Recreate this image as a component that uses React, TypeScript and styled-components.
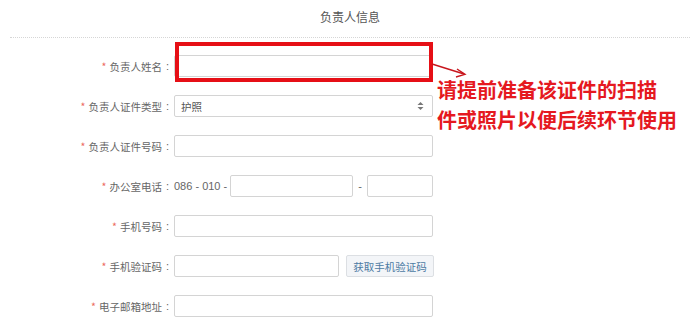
import styled, { createGlobalStyle } from 'styled-components';

const GlobalStyle = createGlobalStyle`
  html, body {
    margin: 0;
    padding: 0;
    background: #fff;
  }
  body {
    font-family: "Noto Sans CJK SC", "Noto Sans", sans-serif;
    color: #666;
  }
`;

const Page = styled.div`
  position: relative;
  width: 700px;
  height: 336px;
  overflow: hidden;
`;

const Title = styled.div`
  height: 37px;
  line-height: 34px;
  text-align: center;
  font-size: 12px;
  color: #555;
`;

const Divider = styled.div`
  margin: 0 10px;
  border-top: 1px dotted #d6d6d6;
`;

const Form = styled.div`
  display: flex;
  flex-direction: column;
  gap: 18px;
  padding-top: 17px;
`;

const Row = styled.div`
  display: grid;
  grid-template-columns: 172px auto;
  column-gap: 2px;
  align-items: center;
  height: 22px;
`;

const Label = styled.label`
  display: flex;
  justify-content: flex-end;
  align-items: center;
  font-size: 10.5px;
  color: #666;
  white-space: nowrap;
`;

const Star = styled.span`
  color: #ec6a5e;
  margin-right: 3px;
`;

const Colon = styled.span`
  margin: 0 3px 0 4px;
  font-family: "Liberation Sans", sans-serif;
  font-size: 11px;
`;

const Field = styled.div<{ $gap?: number }>`
  display: flex;
  align-items: center;
  gap: ${p => p.$gap ?? 4}px;
  font-size: 11px;
  color: #666;
`;

const Input = styled.input<{ $w: number }>`
  box-sizing: border-box;
  width: ${p => p.$w}px;
  height: 22px;
  border: 1px solid #d4d4d4;
  border-radius: 2px;
  background: #fff;
  padding: 0 6px;
  outline: none;
`;

const SelectBox = styled.div`
  box-sizing: border-box;
  width: 259px;
  height: 22px;
  border: 1px solid #d4d4d4;
  border-radius: 2px;
  display: flex;
  align-items: center;
  justify-content: space-between;
  padding: 0 8px 0 6px;
  font-size: 10.5px;
  color: #555;
`;

const Fixed = styled.span`
  font-family: "Liberation Sans", sans-serif;
  font-size: 11px;
  white-space: pre;
`;

const Dash = styled.span`
  width: 8px;
  text-align: center;
  font-family: "Liberation Sans", sans-serif;
`;

const CodeButton = styled.button`
  box-sizing: border-box;
  width: 88px;
  height: 22px;
  margin-left: 3px;
  border: 1px solid #dcdfe3;
  border-radius: 2px;
  background: #f3f5f8;
  color: #4c7aa3;
  font-family: inherit;
  font-size: 10.5px;
  padding: 0;
`;

const RedBox = styled.div`
  position: absolute;
  left: 175px;
  top: 42px;
  width: 258px;
  height: 40px;
  box-sizing: border-box;
  border: 4px solid #e60f16;
`;

const Arrow = styled.svg`
  position: absolute;
  left: 430px;
  top: 60px;
`;

const Note = styled.div`
  position: absolute;
  left: 437px;
  top: 75px;
  font-size: 20px;
  line-height: 30px;
  font-weight: bold;
  color: #e5191f;
`;

const Updown = () => (
  <svg width="7" height="10" viewBox="0 0 7 10">
    <path d="M0.5 4 L3.5 1 L6.5 4 Z" fill="#777" />
    <path d="M0.5 6 L3.5 9 L6.5 6 Z" fill="#777" />
  </svg>
);

const FieldLabel = ({ text }: { text: string }) => (
  <Label>
    <Star>*</Star>
    {text}
    <Colon>:</Colon>
  </Label>
);

const App = () => {
  return (
    <Page>
      <GlobalStyle />
      <Title>负责人信息</Title>
      <Divider />
      <Form>
        <Row>
          <FieldLabel text="负责人姓名" />
          <Field><Input $w={259} /></Field>
        </Row>
        <Row>
          <FieldLabel text="负责人证件类型" />
          <Field>
            <SelectBox>
              <span>护照</span>
              <Updown />
            </SelectBox>
          </Field>
        </Row>
        <Row>
          <FieldLabel text="负责人证件号码" />
          <Field><Input $w={259} /></Field>
        </Row>
        <Row>
          <FieldLabel text="办公室电话" />
          <Field $gap={3}>
            <Fixed>086 - 010 -</Fixed>
            <Input $w={123} />
            <Dash>-</Dash>
            <Input $w={66} />
          </Field>
        </Row>
        <Row>
          <FieldLabel text="手机号码" />
          <Field><Input $w={259} /></Field>
        </Row>
        <Row>
          <FieldLabel text="手机验证码" />
          <Field>
            <Input $w={165} />
            <CodeButton>获取手机验证码</CodeButton>
          </Field>
        </Row>
        <Row>
          <FieldLabel text="电子邮箱地址" />
          <Field><Input $w={259} /></Field>
        </Row>
      </Form>

      <RedBox />
      <Arrow width="40" height="22" viewBox="0 0 40 22">
        <path d="M2 4 L34 14" stroke="#c8161d" strokeWidth="1.4" fill="none" />
        <path d="M27 9 L35 14.3 L26 17" stroke="#c8161d" strokeWidth="1.4" fill="none" />
      </Arrow>
      <Note>
        请提前准备该证件的扫描<br />件或照片以便后续环节使用
      </Note>
    </Page>
  );
};

export default App;
